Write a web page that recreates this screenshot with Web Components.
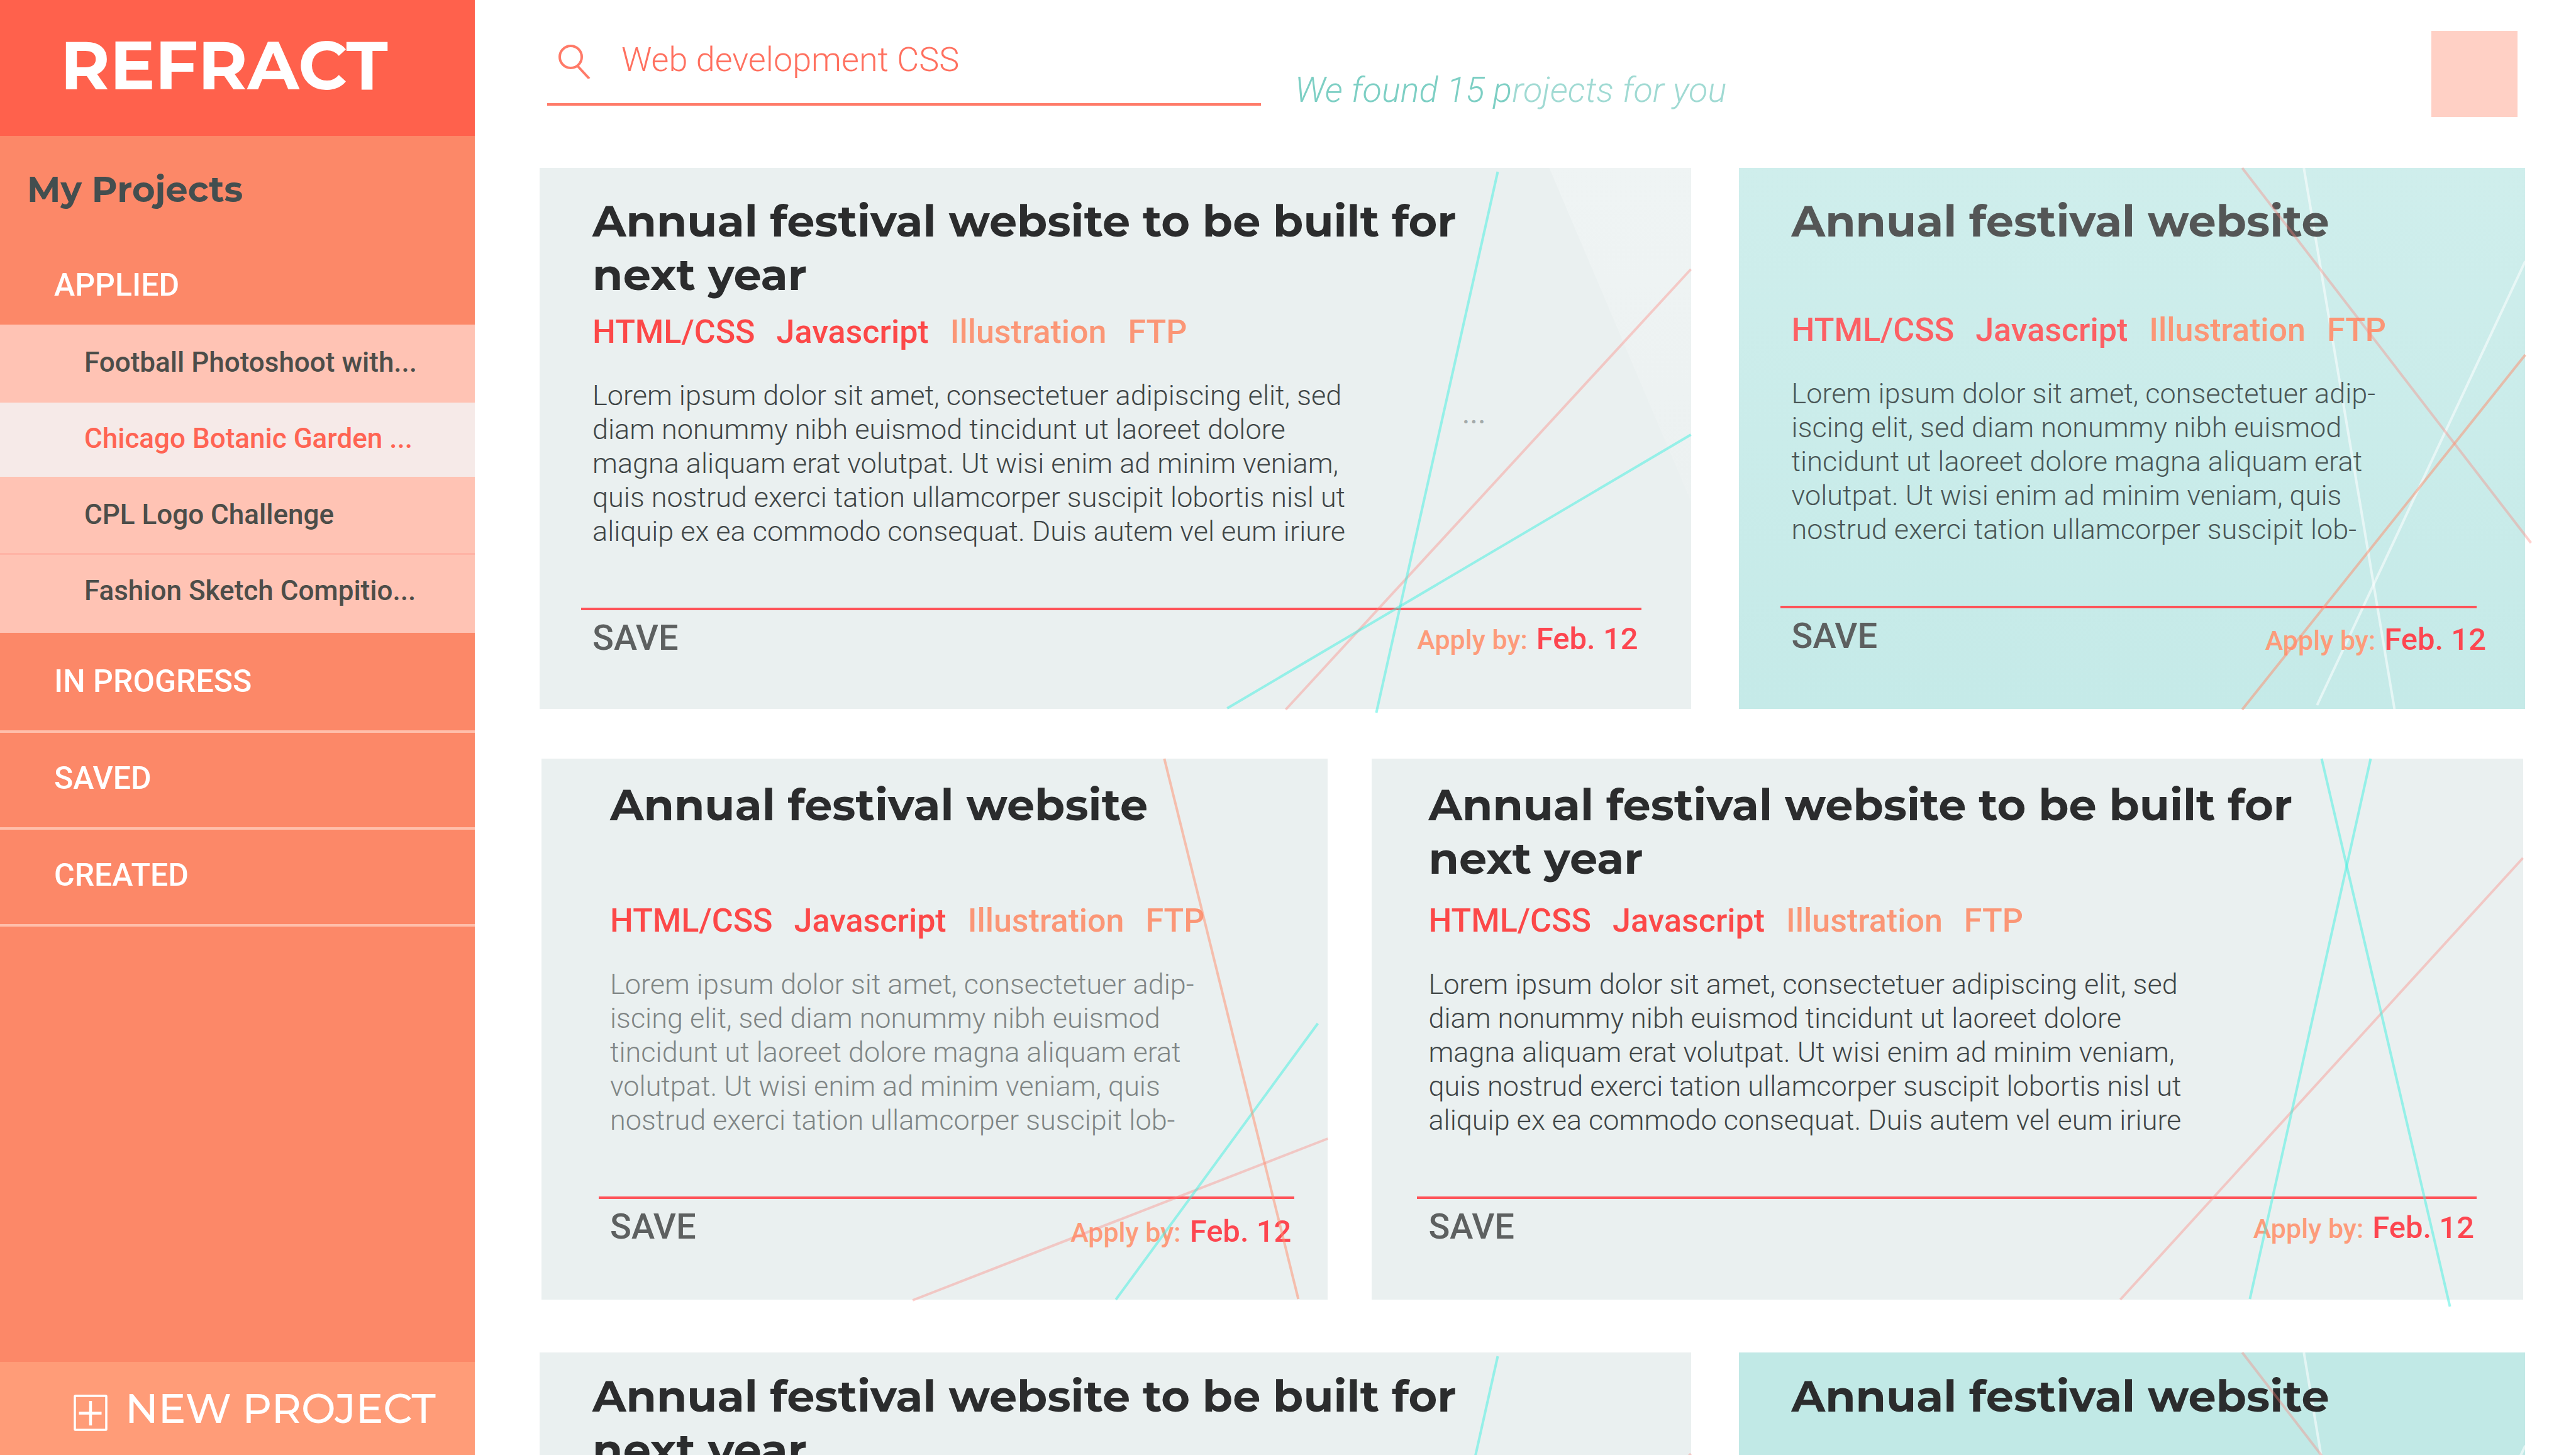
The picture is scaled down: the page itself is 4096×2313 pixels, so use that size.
<!DOCTYPE html>
<html lang="en">
<head>
<meta charset="utf-8">
<title>Refract – My Projects</title>
<style>
html,body{margin:0;height:100%}
body{background:#fff;font-family:Roboto,"Liberation Sans",sans-serif;overflow:hidden}
</style>
</head>
<body>
<refract-app></refract-app>
<script>
const define = (name, html, setup) => {
  const template = document.createElement('template');
  template.innerHTML = html;
  customElements.define(name, class extends HTMLElement {
    connectedCallback() {
      if (this.shadowRoot) return;
      this.attachShadow({ mode: 'open' }).append(template.content.cloneNode(true));
      if (setup) setup(this, this.shadowRoot);
    }
  });
};

/* Sidebar: one project inside an opened section */
define('nav-project', `
<style>
:host{display:block;border-bottom:3px solid #ffc3b4;background:#ffc3b4;background-clip:padding-box}
:host([divided]){border-bottom-color:#ffb3a5}
:host([active]){background-color:#f6eae8}
a{display:block;height:118px;box-sizing:border-box;padding-left:134px;font-size:44px;line-height:114px;font-weight:500;color:#4c4d49;text-decoration:none;white-space:nowrap}
:host([active]) a{color:#ff6453}
</style>
<a href="#"><slot></slot></a>`);

/* Sidebar: a project state */
define('nav-section', `
<style>
:host{display:block}
a{display:block;box-sizing:border-box;height:154px;padding:42px 0 0 86px;border-bottom:4px solid #ffbfab;font-size:50px;line-height:60px;font-weight:500;color:#fff;text-decoration:none}
:host([open]) a{height:180px;padding-top:87px;border-bottom:0}
.list{display:none}
:host([open]) .list{display:block;background:#ffc3b4;padding:3px 0;margin-bottom:5px}
</style>
<a href="#"></a><div class="list"><slot></slot></div>`,
(host, root) => { root.querySelector('a').textContent = host.getAttribute('label'); });

define('side-bar', `
<style>
:host{display:flex;flex-direction:column;background:#fc8868;height:100%}
h1{margin:0;height:216px;box-sizing:border-box;padding:0 0 8px 96px;background:#ff614c;color:#fff;font:700 107px/208px Montserrat,"Open Sans",sans-serif}
h2{margin:0;padding:50px 0 0 43px;color:#434e4f;font:700 56px/70px Montserrat,"Open Sans",sans-serif}
nav{flex:1}
button{display:flex;align-items:center;gap:28px;height:148px;flex:none;border:0;margin:0;padding:0 0 0 117px;background:#ff9c78;color:#fff;font:500 65px/148px Montserrat,"Open Sans",sans-serif;text-align:left}
svg{display:block;width:54px;height:72px}
</style>
<h1>REFRACT</h1>
<h2>My Projects</h2>
<nav aria-label="My Projects">
  <nav-section label="APPLIED" open>
    <nav-project>Football Photoshoot with...</nav-project>
    <nav-project active>Chicago Botanic Garden ...</nav-project>
    <nav-project divided>CPL Logo Challenge</nav-project>
    <nav-project>Fashion Sketch Compitio...</nav-project>
  </nav-section>
  <nav-section label="IN PROGRESS"></nav-section>
  <nav-section label="SAVED"></nav-section>
  <nav-section label="CREATED"></nav-section>
</nav>
<button type="button"><svg viewBox="0 0 54 72" fill="none" stroke="#fff" aria-hidden="true"><rect x="2" y="16" width="50" height="54" stroke-width="3.5" rx="1"/><path d="M27 24v39M8.500 43.500h36" stroke-width="4.500"/></svg><span>NEW PROJECT</span></button>`);

define('top-bar', `
<style>
:host{display:flex;align-items:flex-start;height:267px;padding:0 12px;box-sizing:border-box}
.search{display:flex;align-items:center;gap:48px;box-sizing:border-box;flex:0 1 1135px;padding:65px 0 39px 18px;border-bottom:4px solid #ff7a68}
svg{flex:none;width:52px;height:60px}
input{flex:1;min-width:0;height:60px;border:0;padding:0;margin:0;outline:0;background:none;color:#ff705f;font:300 54px/60px Roboto,"Liberation Sans",sans-serif}
p{flex:1;margin:0;padding:110px 0 0 54px;font-size:56px;line-height:66px;font-weight:300;font-style:italic;color:#7dcfc4}
.soft{color:#a0dad3}
.me{flex:none;width:137px;height:137px;margin-top:49px;border:0;padding:0;background:#ffd0c5}
</style>
<label class="search"><svg viewBox="0 0 52 60" fill="none" stroke="#ff7a68" stroke-width="4" aria-hidden="true"><circle cx="19.500" cy="25.500" r="17.500"/><path d="M30 39.500L49 60"/></svg><input type="text" value="Web development CSS" aria-label="Search projects"></label>
<p>We found 15 p<span class="soft">rojects for you</span></p>
<button class="me" type="button" aria-label="Account"></button>`);

/* Thin crossing rays on each card: [class, x1, y1, x2, y2]; the white ones lie under the text */
const RAYS = {
  prism: { w: 1830, lines: [['pink', 1830, 161, 1186, 861], ['cyan', 1523, 6, 1330, 866], ['cyan', 1830, 424, 1093, 859]] },
  mint: { w: 1250, lines: [['white', 898, 0, 1042, 860], ['white', 1250, 148, 919, 854], ['pink', 800, 0, 1259, 596], ['orange', 1250, 297, 800, 861]] },
  shard: { w: 1250, lines: [['pink', 1250, 604, 590, 861], ['cyan', 1234, 421, 913, 860], ['orange', 990, 0, 1203, 859]] },
  cross: { w: 1830, lines: [['pink', 1830, 158, 1190, 860], ['cyan', 1510, 0, 1714, 871], ['cyan', 1588, 0, 1396, 859]] }
};

define('project-card', `
<style>
:host{display:flex;flex-direction:column;position:relative;isolation:isolate;box-sizing:border-box;min-width:0;min-height:860px;flex:var(--w,1830) 1 0;background:var(--bg,#eaf0f0);
  --in:var(--pad,84px)}
h3{margin:0;box-sizing:border-box;height:var(--head,231px);padding:var(--top,42px) 0 0 var(--in);font:700 70px/85px Montserrat,"Open Sans",sans-serif;color:var(--title,#2b2c2d);white-space:nowrap}
.tags{display:flex;gap:34px;padding-left:var(--in);margin-bottom:44px}
.tags a{font-size:52px;line-height:60px;font-weight:500;color:var(--hot,#fc4848);text-decoration:none}
.tags .soft{color:#fb9676}
.body{display:flex;justify-content:space-between;padding:0 326px 0 var(--in)}
.body p{margin:0;font-size:45px;line-height:54px;font-weight:300;color:var(--ink,#3f4546);white-space:nowrap}
.more{padding-top:28px;font-size:48px;line-height:54px;color:#a3aaaa}
hr{margin:94px var(--rule-r,79px) 0 calc(var(--in) - 18px);border:0;height:4px;background:#ff5359;width:auto}
footer{display:flex;align-items:flex-start;justify-content:space-between;padding:12px var(--due-r,84px) 0 var(--in)}
button{border:0;margin:0;padding:0;background:none;font:500 56px/64px Roboto,"Liberation Sans",sans-serif;color:#5d6060}
.due{margin-top:var(--drop,2px);line-height:64px;font-size:49px;font-weight:500;color:#fd4650;white-space:nowrap}
.due span{font-size:43px;color:#fd9b7a;margin-right:14px}
:host([folded]) :is(.tags,.body,hr,footer){display:none}
svg{position:absolute;inset:0;width:100%;height:100%;overflow:visible;pointer-events:none}
.under{z-index:-1}
line{stroke-width:4;vector-effect:non-scaling-stroke}
.cyan{stroke:#40f0e0;stroke-opacity:.5}
.pink{stroke:#ff8078;stroke-opacity:.36}
.orange{stroke:#ff8c6a;stroke-opacity:.5}
.white{stroke:#fff;stroke-opacity:.55}
</style>
<svg class="under" preserveAspectRatio="none" aria-hidden="true"></svg>
<h3><slot name="title"></slot></h3>
<div class="tags"><a href="#">HTML/CSS</a><a href="#">Javascript</a><a href="#" class="soft">Illustration</a><a href="#" class="soft">FTP</a></div>
<div class="body"><p><slot></slot></p></div>
<hr>
<footer><button type="button">SAVE</button><div class="due"><span>Apply by:</span>Feb. 12</div></footer>
<svg class="over" preserveAspectRatio="none" aria-hidden="true"></svg>`,
(host, root) => {
  const art = RAYS[host.getAttribute('rays')];
  const draw = lines => lines.map(([c, x1, y1, x2, y2]) =>
    `<line class="${c}" x1="${x1}" y1="${y1}" x2="${x2}" y2="${y2}"/>`).join('');
  for (const svg of root.querySelectorAll('svg')) svg.setAttribute('viewBox', `0 0 ${art.w} 860`);
  const shade = host.hasAttribute('shade')
    ? `<linearGradient id="g" x1="0" y1="0" x2="0" y2="1"><stop offset="0" stop-color="#eff4f4"/><stop offset="1" stop-color="#ecf1f1"/></linearGradient><polygon points="1605,0 1830,0 1830,530" fill="url(#g)"/>` : '';
  root.querySelector('.under').innerHTML = shade + draw(art.lines.filter(l => l[0] === 'white'));
  root.querySelector('.over').innerHTML = draw(art.lines.filter(l => l[0] !== 'white'));
  if (host.hasAttribute('more')) {
    const dots = document.createElement('div');
    dots.className = 'more';
    dots.textContent = '...';
    root.querySelector('.body').append(dots);
  }
});

const wideTitle = '<span slot="title">Annual festival website to be built for<br>next year</span>';
const slimTitle = '<span slot="title">Annual festival website</span>';
const wideText = 'Lorem ipsum dolor sit amet, consectetuer adipiscing elit, sed<br>diam nonummy nibh euismod tincidunt ut laoreet dolore<br>magna aliquam erat volutpat. Ut wisi enim ad minim veniam,<br>quis nostrud exerci tation ullamcorper suscipit lobortis nisl ut<br>aliquip ex ea commodo consequat. Duis autem vel eum iriure';
const slimText = 'Lorem ipsum dolor sit amet, consectetuer adip-<br>iscing elit, sed diam nonummy nibh euismod<br>tincidunt ut laoreet dolore magna aliquam erat<br>volutpat. Ut wisi enim ad minim veniam, quis<br>nostrud exerci tation ullamcorper suscipit lob-';

define('refract-app', `
<style>
:host{display:grid;grid-template-columns:755px minmax(0,1fr);height:100vh}
main{padding:0 81px 0 103px;overflow:hidden;min-width:0}
.row{display:flex;gap:76px}
.second{gap:70px;margin:79px 3px 84px}
.slim{--w:1250;--due-r:62px;--drop:6px}
.mint{--rule-r:77px;--head:228px;--bg:linear-gradient(#cfeeec,#c5eae8);--title:#545656;--hot:#fc6064;--ink:#4a5656}
.second project-card{--head:228px;--top:31px}
.second .slim{--pad:109px;--rule-r:53px;--due-r:58px;--drop:8px;--ink:#7f8585}
.second .wide{--pad:90px;--rule-r:74px;--due-r:78px}
.third project-card{--top:27px}
.third .mint{--bg:#c1e9e6;--title:#2b2c2d}
</style>
<side-bar></side-bar>
<main>
  <top-bar></top-bar>
  <div class="row">
    <project-card class="wide" rays="prism" shade more>${wideTitle}${wideText}</project-card>
    <project-card class="slim mint" rays="mint">${slimTitle}${slimText}</project-card>
  </div>
  <div class="row second">
    <project-card class="slim" rays="shard">${slimTitle}${slimText}</project-card>
    <project-card class="wide" rays="cross">${wideTitle}${wideText}</project-card>
  </div>
  <div class="row third">
    <project-card class="wide" rays="prism" folded>${wideTitle}</project-card>
    <project-card class="slim mint" rays="mint" folded>${slimTitle}</project-card>
  </div>
</main>`);
</script>
</body>
</html>
